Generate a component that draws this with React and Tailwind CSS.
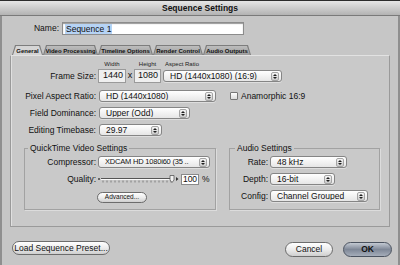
import React from 'react';

const tabs = [
  { label: 'General', w: 'w-[31px]', active: true },
  { label: 'Video Processing', w: 'w-[55px]' },
  { label: 'Timeline Options', w: 'w-[55px]' },
  { label: 'Render Control', w: 'w-[50px]' },
  { label: 'Audio Outputs', w: 'w-[48px]' },
];

function Arrows() {
  return (
    <span className="mr-[2px] flex h-[9px] w-[8px] shrink-0 flex-col items-center justify-center gap-[1px] rounded-[2px] border border-[#a4a4a4] bg-linear-to-b from-[#f6f6f6] to-[#cacaca]">
      <svg width="4" height="2" viewBox="0 0 4 2"><path d="M2 0L4 2H0z" fill="#1e1e1e" /></svg>
      <svg width="4" height="2" viewBox="0 0 4 2"><path d="M0 0h4L2 2z" fill="#1e1e1e" /></svg>
    </span>
  );
}

function Popup({ className, textClass = '', children }) {
  return (
    <div className={`flex h-[12px] items-center rounded-[3px] border border-[#858585] bg-linear-to-b from-white to-[#e6e6e6] pl-[6px] shadow-[0_1px_0_#dedede] ${className}`}>
      <span className={`flex-1 overflow-hidden whitespace-nowrap leading-none ${textClass}`}>{children}</span>
      <Arrows />
    </div>
  );
}

function Pill({ className, children }) {
  return (
    <div className={`flex items-center justify-center rounded-full border border-[#6c6c6c] bg-linear-to-b from-white via-[#ececec] to-[#cfcfcf] leading-none text-[#111] ${className}`}>
      {children}
    </div>
  );
}

function Row({ label, labelW, className, children }) {
  return (
    <div className={`flex h-[12px] items-center ${className}`}>
      <span className={`text-right leading-none ${labelW}`}>{label}</span>
      {children}
    </div>
  );
}

function Slider() {
  const ticks = [];
  for (let x = 6; x <= 74; x += 4) ticks.push(x);
  return (
    <svg width="82" height="10" viewBox="0 0 82 10" className="ml-[1px]">
      <circle cx="2" cy="5" r="1" fill="#444" />
      <line x1="4" y1="4.5" x2="76" y2="4.5" stroke="#555" strokeWidth="1" />
      <line x1="4" y1="5.5" x2="76" y2="5.5" stroke="#fafafa" strokeWidth="1" />
      {ticks.map((x) => (
        <line key={x} x1={x} y1="6.5" x2={x} y2="8.5" stroke="#6a6a6a" strokeWidth="0.8" />
      ))}
      <path d="M73 1.5h4v4.5l-2 2.5-2-2.5z" fill="#f2f2f2" stroke="#555" strokeWidth="0.8" />
      <path d="M79 3l2.5 2-2.5 2z" fill="#333" />
    </svg>
  );
}

export default function App() {
  return (
    <div className="flex h-[265px] w-[400px] flex-col overflow-hidden bg-[#c6c6c6] font-['Liberation_Sans',Arial,sans-serif] text-[8.5px] text-[#111]">
      {/* title bar */}
      <div className="flex h-[16px] shrink-0 items-center justify-center border-t border-b border-t-[#2c2c2c] border-b-[#7a7a7a] bg-linear-to-b from-[#e6e6e6] to-[#b3b3b3] text-[8.5px] font-bold">
        Sequence Settings
      </div>

      <div className="flex flex-1 flex-col border-x-2 border-[#8f8f8f]">
        {/* name */}
        <div className="mt-[6px] flex h-[13px] items-center">
          <span className="w-[57px] text-right">Name:</span>
          <div className="ml-[3px] flex h-[13px] w-[182px] items-center border border-[#8c8c8c] bg-white pl-[2px] shadow-[inset_0_1px_1px_#9a9a9a]">
            <span className="bg-[#b6d3f5] px-[1px] leading-[10px]">Sequence 1</span>
          </div>
        </div>

        {/* tabs */}
        <div className="ml-[10px] mt-[10px] flex h-[10px]">
          {tabs.map((t) => (
            <div
              key={t.label}
              className={`h-[10px] bg-[#7d7d7d] pt-[1px] [clip-path:polygon(3px_0,calc(100%-3px)_0,100%_100%,0_100%)] ${t.w}`}
            >
              <div
                className={`mx-[1px] flex h-[9px] items-center justify-center whitespace-nowrap text-[6px] font-bold leading-none [clip-path:polygon(3px_0,calc(100%-3px)_0,100%_100%,0_100%)] ${
                  t.active ? 'bg-[#d5d5d5]' : 'bg-linear-to-b from-[#bdbdbd] to-[#9d9d9d]'
                }`}
              >
                {t.label}
              </div>
            </div>
          ))}
        </div>

        {/* panel */}
        <div className="ml-[8px] mr-[8px] flex h-[172px] flex-col border border-[#9a9a9a] border-t-[#e2e2e2] bg-[#c9c9c9] shadow-[inset_1px_0_0_#e0e0e0]">
          <div className="mt-[4px] flex h-[8px] items-center text-[6px] leading-none text-[#222]">
            <span className="w-[87px]" />
            <span className="w-[28px] text-center">Width</span>
            <span className="w-[8px]" />
            <span className="w-[27px] text-center">Height</span>
            <span className="ml-[4px]">Aspect Ratio</span>
          </div>

          <div className="mt-[1px] flex h-[14px] items-center">
            <span className="w-[85px] text-right">Frame Size:</span>
            <div className="ml-[2px] flex h-[14px] w-[28px] items-center justify-end border border-[#9a9a9a] bg-[#efefef] pr-[2px] text-[9px]">1440</div>
            <span className="w-[8px] text-center text-[9px]">x</span>
            <div className="flex h-[14px] w-[27px] items-center justify-end border border-[#9a9a9a] bg-[#efefef] pr-[2px] text-[9px]">1080</div>
            <Popup className="ml-[2px] w-[119px]">HD (1440x1080) (16:9)</Popup>
          </div>

          <Row label="Pixel Aspect Ratio:" labelW="w-[85px]" className="mt-[7px]">
            <Popup className="ml-[3px] w-[117px]">HD (1440x1080)</Popup>
            <span className="ml-[14px] h-[8px] w-[8px] rounded-[1px] border border-[#777] bg-linear-to-b from-white to-[#dcdcdc]" />
            <span className="ml-[3px] leading-none">Anamorphic 16:9</span>
          </Row>

          <Row label="Field Dominance:" labelW="w-[85px]" className="mt-[5px]">
            <Popup className="ml-[3px] w-[91px]">Upper (Odd)</Popup>
          </Row>

          <Row label="Editing Timebase:" labelW="w-[85px]" className="mt-[5px]">
            <Popup className="ml-[3px] w-[63px]">29.97</Popup>
          </Row>

          <div className="mt-[7px] flex items-start">
            <fieldset className="ml-[13px] h-[67px] w-[192px] border border-[#a2a2a2] shadow-[1px_1px_0_#dcdcdc]">
              <legend className="ml-[3px] px-[2px] leading-[10px]">QuickTime Video Settings</legend>
              <Row label="Compressor:" labelW="w-[71px]" className="mt-[3px]">
                <Popup className="ml-[2px] w-[112px]" textClass="text-[7.5px] tracking-[-0.2px]">XDCAM HD 1080i60 (35 ..</Popup>
              </Row>
              <Row label="Quality:" labelW="w-[71px]" className="mt-[5px]">
                <Slider />
                <span className="ml-[2px] flex h-[11px] w-[18px] items-center justify-center border border-[#8a8a8a] bg-white leading-none">100</span>
                <span className="ml-[3px] leading-none">%</span>
              </Row>
              <Pill className="ml-[72px] mt-[7px] h-[11px] w-[50px] text-[6.5px]">Advanced...</Pill>
            </fieldset>

            <fieldset className="ml-[13px] h-[67px] w-[151px] border border-[#a2a2a2] shadow-[1px_1px_0_#dcdcdc]">
              <legend className="ml-[5px] px-[2px] leading-[10px]">Audio Settings</legend>
              <Row label="Rate:" labelW="w-[38px]" className="mt-[3px]">
                <Popup className="ml-[2px] w-[77px]">48 kHz</Popup>
              </Row>
              <Row label="Depth:" labelW="w-[38px]" className="mt-[5px]">
                <Popup className="ml-[2px] w-[65px]">16-bit</Popup>
              </Row>
              <Row label="Config:" labelW="w-[38px]" className="mt-[5px]">
                <Popup className="ml-[2px] w-[98px]">Channel Grouped</Popup>
              </Row>
            </fieldset>
          </div>
        </div>

        {/* bottom buttons */}
        <div className="mt-[12px] flex items-center">
          <Pill className="ml-[10px] h-[14px] w-[98px]">Load Sequence Preset...</Pill>
          <Pill className="ml-auto mt-[3px] h-[15px] w-[48px]">Cancel</Pill>
          <div className="ml-[10px] mr-[6px] mt-[3px] flex h-[15px] w-[49px] items-center justify-center rounded-full border border-[#4b5360] bg-linear-to-b from-[#c4cad3] via-[#7f8897] to-[#a5adba] font-bold leading-none text-[#111]">
            OK
          </div>
        </div>
      </div>
    </div>
  );
}
